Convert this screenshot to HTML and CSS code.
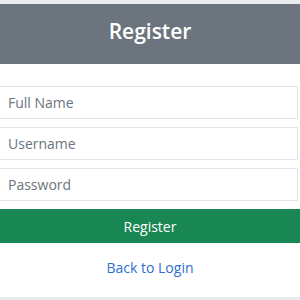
FILE: index.html
```html
<!DOCTYPE html>
<html lang="en">
<head>
    <meta charset="UTF-8">
    <meta name="viewport" content="width=device-width, initial-scale=1.0">
    <title>Register</title>
    <link rel="stylesheet" href="styles.css">
</head>
<body>
    <div class="register-card">
        <div class="card-header">
            <h1>Register</h1>
        </div>

        <form id="registerForm" class="card-body">
            <input type="text" class="form-control" placeholder="Full Name">
            <input type="text" class="form-control" placeholder="Username">
            <input type="password" class="form-control" placeholder="Password">
            <button type="submit" class="btn-register">Register</button>
        </form>

        <div class="card-footer">
            <a href="#" class="back-link">Back to Login</a>
        </div>
    </div>
</body>
</html>
```

FILE: styles.css
```css
* {
    margin: 0;
    padding: 0;
    box-sizing: border-box;
}

body {
    font-family: 'Open Sans', 'Noto Sans', sans-serif;
    background: #e9ecef;
    padding: 4px 0 2px;
}

.register-card {
    background: white;
    width: 100%;
}

.card-header {
    background: #6c757d;
    height: 60px;
    padding-bottom: 6px;
    display: flex;
    align-items: center;
    justify-content: center;
}

.card-header h1 {
    color: white;
    font-size: 21px;
    font-weight: 600;
}

.card-body {
    display: flex;
    flex-direction: column;
    gap: 8px;
    padding: 22px 2px 0 0;
}

.form-control {
    width: calc(100% + 1px);
    margin-left: -1px;
    height: 33px;
    padding: 0 8px;
    border: 1px solid #e3e6e9;
    border-radius: 0;
    font-family: inherit;
    font-size: 14px;
    color: #495057;
}

.form-control::placeholder {
    color: #6c757d;
}

.btn-register {
    width: calc(100% + 2px);
    height: 34px;
    background: #198754;
    color: white;
    border: none;
    border-radius: 0;
    font-family: inherit;
    font-size: 14px;
    cursor: pointer;
}

.card-footer {
    height: 54px;
    padding-bottom: 5px;
    display: flex;
    align-items: center;
    justify-content: center;
}

.back-link {
    color: #2f6fd0;
    font-size: 14px;
    text-decoration: none;
}
```
